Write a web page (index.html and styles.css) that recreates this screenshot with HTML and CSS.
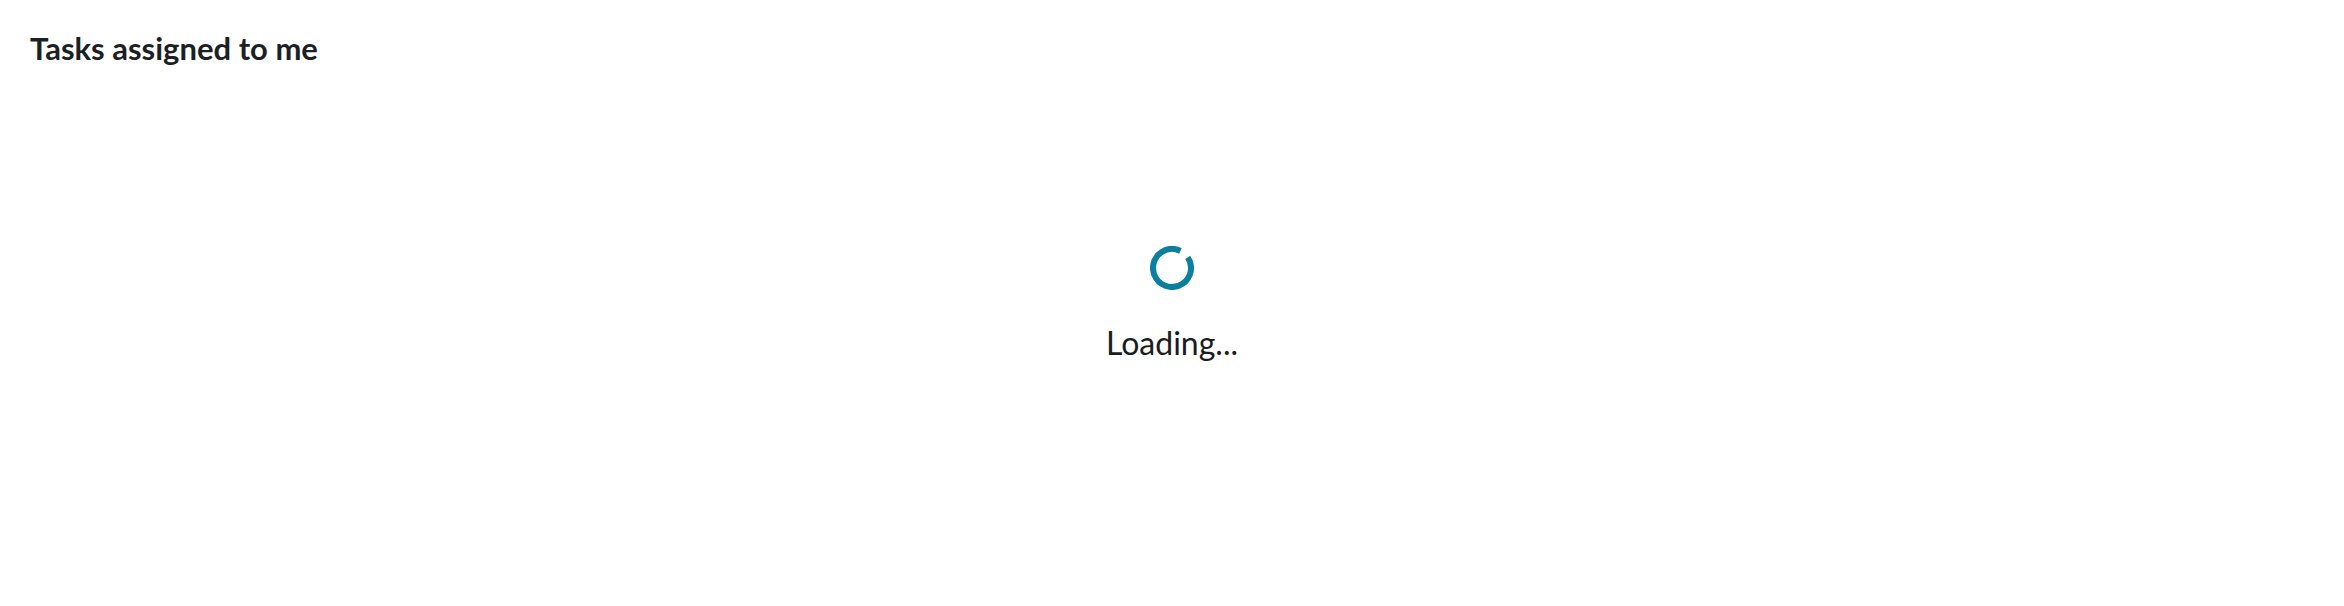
FILE: index.html
```html
<!DOCTYPE html>
<html lang="en">
<head>
<meta charset="utf-8">
<title>Tasks assigned to me</title>
<link rel="stylesheet" href="styles.css">
</head>
<body>
<div class="page">
  <h1 class="title">Tasks assigned to me</h1>
  <div class="loading">
    <svg class="spinner" width="44" height="44" viewBox="0 0 44 44" aria-hidden="true">
      <circle cx="22" cy="22" r="19" fill="none" stroke="#0b7fa0" stroke-width="6" stroke-dasharray="108.8 10.6" transform="rotate(326 22 22)"/>
    </svg>
    <div class="loading-text">Loading...</div>
  </div>
</div>
</body>
</html>
```
FILE: styles.css
```css
html, body {
  margin: 0;
  padding: 0;
  background: #ffffff;
}
.page {
  padding: 30px 0 0 30px;
  font-family: Lato, "Open Sans", sans-serif;
}
.title {
  margin: 0;
  font-size: 31px;
  line-height: 36px;
  font-weight: 700;
  color: #1c1f26;
}
.loading {
  display: flex;
  flex-direction: column;
  align-items: center;
  margin-top: 180px;
  margin-left: -30px;
}
.spinner {
  display: block;
}
.loading-text {
  margin-top: 34px;
  font-size: 32px;
  line-height: 38px;
  color: #1a1c20;
}
```
